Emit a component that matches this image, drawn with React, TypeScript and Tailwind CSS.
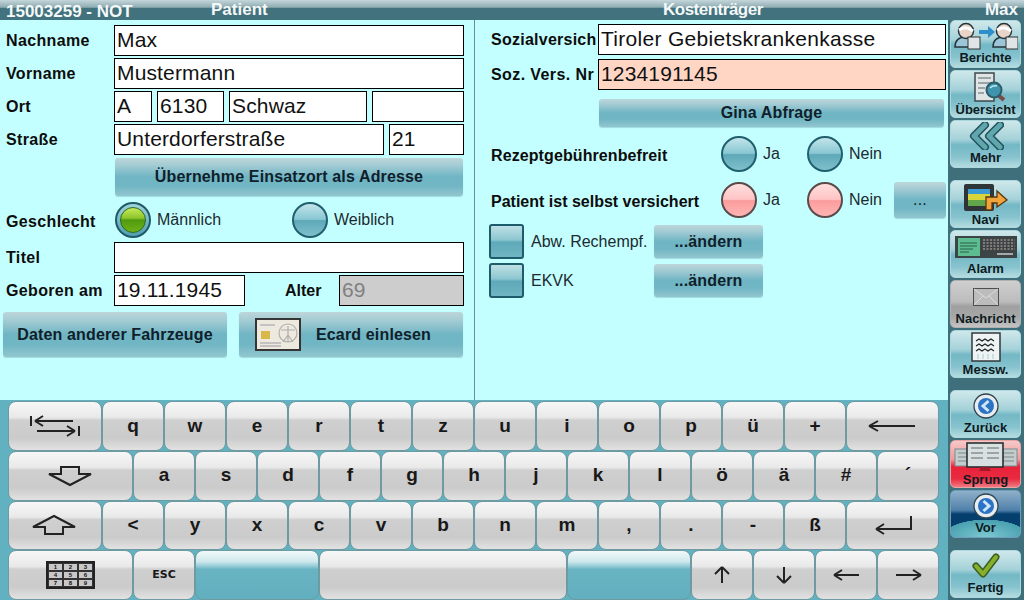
import React from 'react';

const glossBtn =
  'flex items-center justify-center rounded-[3px] bg-[linear-gradient(#bdd6da_0%,#a5ccd4_18%,#6fb5c4_50%,#70b6c4_72%,#93c6cf_100%)] text-[16px] font-bold tracking-[0.15px] text-[#10202a] shadow-[0_1px_1px_#9fdadf]';

const Label = ({ w, children, className = '' }: { w: string; children: React.ReactNode; className?: string }) => (
  <span className={`${w} shrink-0 text-[16px] font-bold whitespace-nowrap text-[#0c0c0c] ${className}`}>{children}</span>
);

const Field = ({ className, children }: { className: string; children?: React.ReactNode }) => (
  <div className={`flex h-[31px] items-center border border-black pb-[2px] pl-[2px] text-[21px] tracking-[0.15px] text-[#111] ${className}`}>
    {children}
  </div>
);

const Radio = ({ kind = 'teal' }: { kind?: 'teal' | 'pink' | 'green' }) => {
  if (kind === 'green') {
    return (
      <div className="flex h-[36px] w-[36px] shrink-0 items-center justify-center rounded-full border-2 border-[#205a68] bg-[linear-gradient(#9fd4dc,#4f9fb0)]">
        <div className="h-[26px] w-[26px] rounded-full border border-[#2c6a20] bg-[linear-gradient(#c5e85a_0%,#8fc52a_42%,#4f9a10_50%,#6fb218_100%)]" />
      </div>
    );
  }
  const cls =
    kind === 'pink'
      ? 'border-[#5a4a4a] bg-[linear-gradient(#ffdede_0%,#ffc4c4_48%,#fb9c9c_52%,#ffb4b4_100%)]'
      : 'border-[#1f5f6e] bg-[linear-gradient(#c2e4e9_0%,#88c7d2_48%,#5ea8b8_52%,#80c0cc_100%)]';
  return <div className={`h-[36px] w-[36px] shrink-0 rounded-full border-2 ${cls}`} />;
};

const Check = () => (
  <div className="h-[35px] w-[35px] shrink-0 rounded-[3px] border-2 border-[#1d5c6a] bg-[linear-gradient(#bfe0e5_0%,#8cc6d0_45%,#5ea9b8_52%,#70b5c3_100%)]" />
);

/* ---------- sidebar icons ---------- */
const Person = ({ x }: { x: number }) => (
  <g transform={`translate(${x} 0)`}>
    <path d="M1 25 Q1 15 12 15 Q22 15 23 25 Z" fill="#9cc6d8" stroke="#24363c" strokeWidth="1.5" />
    <circle cx="12" cy="9" r="7.5" fill="#e8d5c8" stroke="#24363c" strokeWidth="1.5" />
    <path d="M5 8 Q12 3 19 9" stroke="#fff" strokeWidth="3" fill="none" />
    <rect x="14" y="15" width="12" height="12" fill="#dfe4e6" stroke="#333" />
  </g>
);

const BerichteIcon = () => (
  <svg width="64" height="28" viewBox="0 0 64 28">
    <Person x={0} />
    <path d="M25 8 H34 V4 L41 10 L34 16 V12 H25 Z" fill="#2f8fcb" />
    <Person x={38} />
  </svg>
);

const UebersichtIcon = () => (
  <svg width="38" height="30" viewBox="0 0 38 30">
    <path d="M8 1 H27 V29 H8 Z" fill="#e2e5e6" stroke="#3c4a4e" strokeWidth="1.5" />
    <path d="M11 6 H24 M11 11 H24 M11 16 H18 M11 21 H17" stroke="#9aa5a8" strokeWidth="2" />
    <path d="M31 23 L37 28" stroke="#7a4a4a" strokeWidth="4" />
    <circle cx="27" cy="18" r="7.5" fill="#3f94ad" stroke="#2c5c6a" strokeWidth="2" />
    <path d="M23 16 Q26 13 30 14" stroke="#bfe6ee" strokeWidth="1.5" fill="none" />
  </svg>
);

const MehrIcon = () => (
  <svg width="36" height="28" viewBox="0 0 36 28">
    <path d="M17 3 L6 14 L17 25" fill="none" stroke="#23525c" strokeWidth="8" strokeLinejoin="round" strokeLinecap="round" />
    <path d="M17 3 L6 14 L17 25" fill="none" stroke="#5fa6ad" strokeWidth="5" strokeLinejoin="round" strokeLinecap="round" />
    <path d="M32 3 L21 14 L32 25" fill="none" stroke="#23525c" strokeWidth="8" strokeLinejoin="round" strokeLinecap="round" />
    <path d="M32 3 L21 14 L32 25" fill="none" stroke="#5fa6ad" strokeWidth="5" strokeLinejoin="round" strokeLinecap="round" />
  </svg>
);

const NaviIcon = () => (
  <svg width="46" height="30" viewBox="0 0 46 30">
    <rect x="1" y="2" width="30" height="27" rx="2" fill="#2d3538" />
    <rect x="5" y="7" width="22" height="5" fill="#3b9ad4" />
    <rect x="5" y="12" width="22" height="6" fill="#d8d43a" />
    <rect x="5" y="18" width="22" height="6" fill="#62a84a" />
    <path d="M23 28 V15 H34 V9 L44 18 L34 25 V21 H29 V28 Z" fill="#f2a43c" stroke="#58360f" strokeWidth="1.3" />
  </svg>
);

const AlarmIcon = () => (
  <svg width="62" height="24" viewBox="0 0 62 24">
    <rect x="0" y="1" width="62" height="22" fill="#3c4446" />
    <rect x="3" y="3" width="22" height="18" fill="#5dbd90" />
    <path d="M5 8 H22 M5 11 H22 M5 14 H18 M5 17 H14" stroke="#28604a" strokeWidth="1" />
    <path d="M28 5 H60 M28 8 H60 M28 11 H60 M28 14 H60" stroke="#827b78" strokeWidth="2" strokeDasharray="2 1.5" />
    <path d="M42 19 H58" stroke="#a8a8a8" strokeWidth="2" />
  </svg>
);

const NachrichtIcon = () => (
  <svg width="26" height="18" viewBox="0 0 26 18">
    <rect x="0.5" y="0.5" width="25" height="17" fill="#bcbcbc" stroke="#4e4e4e" />
    <path d="M1 1 L13 10 L25 1 M1 17 L10 8 M25 17 L16 8" stroke="#dcdcdc" fill="none" />
  </svg>
);

const MesswIcon = () => (
  <svg width="30" height="30" viewBox="0 0 30 30">
    <rect x="1" y="1" width="28" height="28" fill="#eef4f4" stroke="#30393c" strokeWidth="1.5" />
    <path d="M5 9 l3 -2 l3 2 l3 -2 l3 2 l3 -2 l3 2 M5 14 l3 -2 l3 2 l3 -2 l3 2 l3 -2 l3 2 M5 19 l3 -2 l3 2 l3 -2 l3 2 l3 -2 l3 2" stroke="#222" strokeWidth="1.2" fill="none" />
    <path d="M7 22 V27 M12 22 V27 M17 22 V27 M22 22 V27" stroke="#a8c8cc" strokeWidth="1" />
  </svg>
);

const RoundIcon = ({ dir }: { dir: 'left' | 'right' }) => (
  <svg width="26" height="26" viewBox="0 0 26 26">
    <circle cx="13" cy="13" r="12" fill="#e6ecef" stroke="#2f4450" strokeWidth="1.3" />
    <circle cx="13" cy="13" r="8" fill="#2b73c4" />
    <path d={dir === 'left' ? 'M15.5 8 L10 13 L15.5 18' : 'M10.5 8 L16 13 L10.5 18'} fill="none" stroke="#cfe5f8" strokeWidth="3" />
  </svg>
);

const SprungIcon = () => (
  <svg width="66" height="30" viewBox="0 0 66 30">
    <rect x="2" y="7" width="20" height="17" fill="#c4cdce" stroke="#7a8a8c" />
    <rect x="44" y="7" width="20" height="17" fill="#c4cdce" stroke="#7a8a8c" />
    <path d="M5 11 H19 M5 15 H19 M5 19 H19 M47 11 H61 M47 15 H61 M47 19 H61" stroke="#7b878a" strokeWidth="1.2" />
    <rect x="14" y="1" width="36" height="24" fill="#d8e0e0" stroke="#2a3032" strokeWidth="1.6" />
    <path d="M18 6 H30 M34 6 H46 M18 11 H30 M34 11 H46 M18 16 H30 M34 16 H46" stroke="#5e696c" strokeWidth="1.2" />
    <path d="M28 25 H36 L38 29 H26 Z" fill="#a11a2a" />
  </svg>
);

const FertigIcon = () => (
  <svg width="28" height="26" viewBox="0 0 28 26">
    <path d="M4 13 L11 21 L24 4" fill="none" stroke="#3d5f24" strokeWidth="7" strokeLinejoin="round" strokeLinecap="round" />
    <path d="M4 13 L11 21 L24 4" fill="none" stroke="#86b02c" strokeWidth="4" strokeLinejoin="round" strokeLinecap="round" />
  </svg>
);

const EcardIcon = () => (
  <svg width="46" height="33" viewBox="0 0 46 33">
    <rect x="1" y="1" width="44" height="31" fill="#ede9df" stroke="#353535" strokeWidth="2" />
    <path d="M5 7 H20 M5 25 H26 M5 28 H26" stroke="#9a9aa4" strokeWidth="1.2" />
    <rect x="6" y="13" width="9" height="8" fill="#d9b84a" />
    <circle cx="33" cy="15" r="9" fill="none" stroke="#b0aeae" strokeWidth="1.2" />
    <path d="M33 8 V24 M26 12 L40 12 M33 17 L28 24 M33 17 L38 24" stroke="#b0aeae" strokeWidth="1.2" />
  </svg>
);

type SideKind = 'normal' | 'gray' | 'red' | 'blue';

const sideBg: Record<SideKind, string> = {
  normal: 'border-[#a9d8de] bg-[linear-gradient(#cfe8eb_0%,#a5d2d9_40%,#73b8c5_52%,#86c3ce_78%,#b4dbe0_100%)]',
  gray: 'border-[#b0b0b0] bg-[linear-gradient(#cfcfcf_0%,#bcbcbc_45%,#a0a0a0_55%,#a8a8a8_80%,#c4c4c4_100%)]',
  red: 'border-[#e7a5a5] bg-[linear-gradient(#f6c8c8_0%,#f09a9a_40%,#e8223a_55%,#e82a40_82%,#f27a80_100%)]',
  blue: 'border-[#6f9dbd] bg-[radial-gradient(ellipse_62%_38%_at_50%_100%,#7cc9d2_0%,#4aa0b0_98%,transparent_100%),linear-gradient(#8fb0c9_0%,#4f80aa_42%,#053f6e_50%,#053f6e_100%)]',
};

const SideBtn = ({ label, icon, kind = 'normal', className = 'pb-[2px]' }: { label: string; icon: React.ReactNode; kind?: SideKind; className?: string }) => (
  <div className={`flex h-[48px] w-[71px] shrink-0 flex-col items-center justify-between overflow-hidden rounded-[5px] border pt-[1px] ${sideBg[kind]} ${className}`}>
    <div className="flex h-[30px] items-center justify-center">{icon}</div>
    <span className="text-[13px] leading-[15px] font-bold text-[#0d1a20]">{label}</span>
  </div>
);

/* ---------- keyboard ---------- */
const keyFace = 'bg-[linear-gradient(#f7f7f7_0%,#e9e9e9_32%,#cfcfcf_38%,#cbcbcb_75%,#e2e2e2_100%)]';
const tealFace = 'bg-[linear-gradient(#f2f9fa_0%,#cfe8ec_22%,#8cc8d3_33%,#69b4c3_38%,#62afbf_100%)]';

const Key = ({ w = 'w-[62px]', teal, children, text = 'text-[19px]' }: { w?: string; teal?: boolean; children?: React.ReactNode; text?: string }) => (
  <div className={`flex h-[49.75px] shrink-0 items-center justify-center rounded-[8px] border border-[#6f9aa2] font-bold text-[#181818] ${text} ${w} ${teal ? tealFace : keyFace}`}>
    {children}
  </div>
);

const Line = ({ d, w = 52, h = 24 }: { d: string; w?: number; h?: number }) => (
  <svg width={w} height={h} viewBox={`0 0 ${w} ${h}`}>
    <path d={d} fill="none" stroke="#222" strokeWidth="2" />
  </svg>
);

const NumPad = () => (
  <div className="grid h-[28px] w-[49px] grid-cols-3 gap-[2px] border-2 border-[#222] bg-[#333] p-[1px]">
    {['1', '2', '3', '4', '5', '6', '7', '8', '9'].map((n) => (
      <span key={n} className="flex items-center justify-center bg-[#c8c8c8] text-[6px] leading-none font-bold text-[#111]">{n}</span>
    ))}
  </div>
);

const row1 = ['q', 'w', 'e', 'r', 't', 'z', 'u', 'i', 'o', 'p', 'ü', '+'];
const row2 = ['a', 's', 'd', 'f', 'g', 'h', 'j', 'k', 'l', 'ö', 'ä', '#', '´'];
const row3 = ['<', 'y', 'x', 'c', 'v', 'b', 'n', 'm', ',', '.', '-', 'ß'];

const Keyboard = () => (
  <div className="flex h-[200px] flex-col bg-[#62b1c0] pt-px pl-2">
    <div className="flex">
      <Key w="w-[94px]">
        <Line d="M2 2 V12 M50 12 V22 M6 7 H44 M6 7 L14 2 M6 7 L14 12 M8 17 H46 M46 17 L38 12 M46 17 L38 22" />
      </Key>
      {row1.map((k) => <Key key={k}>{k}</Key>)}
      <Key w="w-[93px]">
        <Line d="M2 8 H48 M2 8 L11 3 M2 8 L11 13" h={16} />
      </Key>
    </div>
    <div className="flex">
      <Key w="w-[125px]">
        <Line d="M16 3 H34 V10 H46 L25 21 L4 10 H16 Z" />
      </Key>
      {row2.map((k) => <Key key={k}>{k}</Key>)}
    </div>
    <div className="flex">
      <Key w="w-[94px]">
        <Line d="M16 21 H34 V14 H46 L25 3 L4 14 H16 Z" />
      </Key>
      {row3.map((k) => <Key key={k}>{k}</Key>)}
      <Key w="w-[93px]">
        <Line d="M38 1 V14 H3 M3 14 L11 9 M3 14 L11 19" w={40} h={20} />
      </Key>
    </div>
    <div className="flex">
      <Key w="w-[125px]"><NumPad /></Key>
      <Key text="text-[11px] font-['DejaVu_Sans',sans-serif]">ESC</Key>
      <Key w="w-[124px]" teal />
      <Key w="w-[248px]" />
      <Key w="w-[124px]" teal />
      <Key><Line d="M10 19 V3 M10 3 L3 10 M10 3 L17 10" w={20} h={22} /></Key>
      <Key><Line d="M10 3 V19 M10 19 L3 12 M10 19 L17 12" w={20} h={22} /></Key>
      <Key><Line d="M1 9 H26 M1 9 L9 4 M1 9 L9 14" w={27} h={18} /></Key>
      <Key><Line d="M1 9 H26 M26 9 L18 4 M26 9 L18 14" w={27} h={18} /></Key>
    </div>
  </div>
);

const plain = 'text-[16px] text-[#1b2a30]';

export default function App() {
  return (
    <div className="flex h-[600px] w-[1024px] flex-col overflow-hidden bg-[#3f6f7b] font-['Liberation_Sans',Arial,sans-serif]">
      {/* title bar */}
      <header className="flex h-5 shrink-0 bg-[linear-gradient(#c4d6da_0%,#8fadb3_36%,#42727e_42%,#42727e_100%)] pl-[6px] text-[17px] leading-[19px] font-bold text-[#f4f8f8]">
        <span className="mt-[2px] w-[205px]">15003259 - NOT</span>
        <span className="w-[452px]">Patient</span>
        <span className="w-[300px] tracking-[-0.5px]">Kostenträger</span>
        <span className="ml-auto pr-[6px]">Max</span>
      </header>

      <div className="flex flex-1">
        <div className="flex w-[948px] flex-col">
          <main className="flex h-[380px] bg-[#c4ffff]">
            {/* patient */}
            <section className="flex w-[475px] shrink-0 flex-col border-r border-[#6a8f98] pt-[5px]">
              <div className="flex h-[33px] items-start pl-[6px]">
                <div className="flex h-[31px] items-center"><Label w="w-[108px]" className="tracking-[0.35px]">Nachname</Label></div>
                <Field className="w-[350px] bg-white">Max</Field>
              </div>
              <div className="flex h-[33px] items-start pl-[6px]">
                <div className="flex h-[31px] items-center"><Label w="w-[108px]" className="tracking-[0.35px]">Vorname</Label></div>
                <Field className="w-[350px] bg-white">Mustermann</Field>
              </div>
              <div className="flex h-[33px] items-start pl-[6px]">
                <div className="flex h-[31px] items-center"><Label w="w-[108px]" className="tracking-[0.35px]">Ort</Label></div>
                <div className="flex gap-[5px]">
                  <Field className="w-[38px] bg-white">A</Field>
                  <Field className="w-[67px] bg-white">6130</Field>
                  <Field className="w-[138px] bg-white">Schwaz</Field>
                  <Field className="w-[92px] bg-white" />
                </div>
              </div>
              <div className="flex h-[33px] items-start pl-[6px]">
                <div className="flex h-[31px] items-center"><Label w="w-[108px]" className="tracking-[0.35px]">Straße</Label></div>
                <div className="flex gap-[5px]">
                  <Field className="w-[270px] bg-white">Unterdorferstraße</Field>
                  <Field className="w-[75px] bg-white">21</Field>
                </div>
              </div>
              <div className={`ml-[115px] mt-[1px] h-[38px] w-[348px] ${glossBtn}`}>Übernehme Einsatzort als Adresse</div>
              <div className="mt-[6px] flex h-[36px] items-center pl-[6px]">
                <Label w="w-[109px]" className="pt-[4px] tracking-[0.35px]">Geschlecht</Label>
                <Radio kind="green" />
                <span className={`ml-[6px] w-[135px] ${plain}`}>Männlich</span>
                <Radio />
                <span className={`ml-[6px] ${plain}`}>Weiblich</span>
              </div>
              <div className="mt-[4px] flex h-[33px] items-start pl-[6px]">
                <div className="flex h-[31px] items-center"><Label w="w-[108px]" className="tracking-[0.35px]">Titel</Label></div>
                <Field className="w-[350px] bg-white" />
              </div>
              <div className="flex h-[31px] items-center pl-[6px]">
                <Label w="w-[108px]" className="tracking-[0.35px]">Geboren am</Label>
                <Field className="w-[131px] bg-white">19.11.1945</Field>
                <span className="ml-[40px] w-[54px] text-[16px] font-bold text-[#0c0c0c]">Alter</span>
                <Field className="w-[125px] bg-[#cdcdcd] text-[#808080]">69</Field>
              </div>
              <div className="mt-[6px] flex gap-3 pl-[3px]">
                <div className={`h-[45px] w-[224px] ${glossBtn}`}>Daten anderer Fahrzeuge</div>
                <div className={`h-[45px] w-[224px] justify-start! pl-[16px] ${glossBtn}`}>
                  <EcardIcon />
                  <span className="ml-[15px]">Ecard einlesen</span>
                </div>
              </div>
            </section>

            {/* kostentraeger */}
            <section className="flex flex-1 flex-col pt-[4px] pl-[14px]">
              <div className="flex h-[31px] items-center pl-[2px]">
                <Label w="w-[107px]" className="tracking-[0.25px]">Sozialversich</Label>
                <Field className="w-[348px] bg-white tracking-[0.3px]!">Tiroler Gebietskrankenkasse</Field>
              </div>
              <div className="mt-[4px] flex h-[31px] items-center pl-[2px]">
                <Label w="w-[107px]" className="tracking-[0.4px]">Soz. Vers. Nr</Label>
                <Field className="w-[348px] bg-[#ffd5c4]">1234191145</Field>
              </div>
              <div className={`mt-[9px] ml-[110px] h-[28px] w-[345px] ${glossBtn}`}>Gina Abfrage</div>
              <div className="mt-[9px] flex h-[36px] items-center pl-[2px]">
                <Label w="w-[230px]" className="pt-[4px] tracking-[0.1px]">Rezeptgebührenbefreit</Label>
                <Radio />
                <span className={`ml-[6px] w-[44px] ${plain}`}>Ja</span>
                <Radio />
                <span className={`ml-[6px] ${plain}`}>Nein</span>
              </div>
              <div className="mt-[10px] flex h-[36px] items-center pl-[2px]">
                <Label w="w-[230px]" className="pt-[4px]">Patient ist selbst versichert</Label>
                <Radio kind="pink" />
                <span className={`ml-[6px] w-[44px] ${plain}`}>Ja</span>
                <Radio kind="pink" />
                <span className={`ml-[6px] w-[45px] ${plain}`}>Nein</span>
                <div className={`h-[36px] w-[52px] font-normal! ${glossBtn}`}>...</div>
              </div>
              <div className="mt-[6px] flex h-[35px] items-center">
                <Check />
                <span className={`ml-[7px] w-[123px] whitespace-nowrap ${plain}`}>Abw. Rechempf.</span>
                <div className={`h-[33px] w-[109px] ${glossBtn}`}>...ändern</div>
              </div>
              <div className="mt-[4px] flex h-[35px] items-center">
                <Check />
                <span className={`ml-[7px] w-[123px] ${plain}`}>EKVK</span>
                <div className={`h-[33px] w-[109px] ${glossBtn}`}>...ändern</div>
              </div>
            </section>
          </main>
          <Keyboard />
        </div>

        {/* side buttons */}
        <aside className="flex w-[76px] flex-col gap-[2px] pl-[2px]">
          <SideBtn label="Berichte" icon={<BerichteIcon />} />
          <SideBtn label="Übersicht" icon={<UebersichtIcon />} />
          <SideBtn label="Mehr" icon={<MehrIcon />} />
          <SideBtn label="Navi" icon={<NaviIcon />} className="mt-[10px]" />
          <SideBtn label="Alarm" icon={<AlarmIcon />} className="pb-[1px]" />
          <SideBtn label="Nachricht" icon={<NachrichtIcon />} kind="gray" className="pb-[1px]" />
          <SideBtn label="Messw." icon={<MesswIcon />} className="pb-[1px]" />
          <SideBtn label="Zurück" icon={<RoundIcon dir="left" />} className="mt-[10px] pb-[2px]" />
          <SideBtn label="Sprung" icon={<SprungIcon />} kind="red" />
          <SideBtn label="Vor" icon={<RoundIcon dir="right" />} kind="blue" />
          <SideBtn label="Fertig" icon={<FertigIcon />} className="mt-[10px] pb-[2px]" />
        </aside>
      </div>
    </div>
  );
}
